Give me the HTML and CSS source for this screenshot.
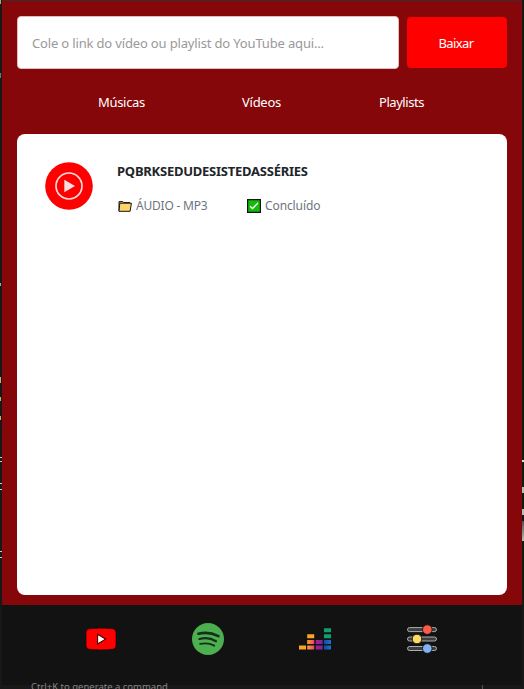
FILE: index.html
```html
<!DOCTYPE html>
<html lang="pt-BR">
<head>
<meta charset="utf-8">
<title>Downloader</title>
<link rel="stylesheet" href="styles.css">
</head>
<body>
<div class="window">
  <main class="content">
    <form class="search">
      <input class="link" type="text" placeholder="Cole o link do vídeo ou playlist do YouTube aqui...">
      <button class="download" type="button">Baixar</button>
    </form>
    <nav class="tabs"><a class="tab">Músicas</a><a class="tab">Vídeos</a><a class="tab tab-playlists">Playlists</a></nav>
    <section class="list">
      <article class="item">
        <svg class="cover" viewBox="0 0 48 48"><circle cx="24" cy="24" r="23.8" fill="#f00"/><circle cx="24" cy="24" r="13" fill="none" stroke="#f5dede" stroke-width="1.7"/><path d="M19.3 17.7v12.6L30 24z" fill="#f5dede"/></svg>
        <div class="info">
          <h1 class="title">PQBRKSEDUDESISTEDASSÉRIES</h1>
          <div class="meta">
            <span class="format"><svg class="folder" viewBox="0 0 14 14"><path d="M1 12.2V2.6h3.8l1 1h6v2" fill="#e5b84d" stroke="#151515"/><path d="M1 12.3 1.8 4.2h11.6l-1.3 8.1z" fill="#ffd56b" stroke="#151515"/></svg><span class="format-text">ÁUDIO - MP3</span></span>
            <span class="status"><svg class="check" viewBox="0 0 14 14"><path d="M.6.6h12.8v12.8H.6z" fill="#13b90b" stroke="#101510" stroke-width="1.2"/><path d="m3 7.2 2.5 2.3L11 4" fill="none" stroke="#fff" stroke-width="1.3"/></svg><span class="status-text">Concluído</span></span>
          </div>
        </div>
      </article>
    </section>
  </main>
  <footer class="dock">
    <svg class="icon" viewBox="0 0 32 32"><path d="M4 5.8Q16 4.3 28 5.8 31 6.4 31 10v12q0 3.8-3 4.3-12 1.3-24 0-3-.5-3-4.3V10q0-3.6 3-4.2Z" fill="#f00" stroke="#240303" stroke-width=".7"/><path d="M12.6 11.2v9.7l7.9-4.8z" fill="#fff" stroke="#3c0000" stroke-width="1.1"/></svg>
    <svg class="icon" viewBox="0 0 32 32"><circle cx="16" cy="16" r="16" fill="#4caf50"/><g fill="none" stroke="#15301a" stroke-linecap="round"><path d="M6.4 10.8q10.4-2.5 20 2.3" stroke-width="2.7"/><path d="M7.4 16q9.2-2.3 16.6 2.2" stroke-width="2.2"/><path d="M8.1 20.9q8-1.8 14.2 1.7" stroke-width="1.8"/></g></svg>
    <svg class="icon" viewBox="0 0 32 32">
      <defs>
        <linearGradient id="b"><stop stop-color="#f9a12a"/><stop offset="1" stop-color="#ec4767"/></linearGradient>
        <linearGradient id="c"><stop stop-color="#b6198b"/><stop offset="1" stop-color="#6a2ba0"/></linearGradient>
        <linearGradient id="d"><stop stop-color="#1746a8"/><stop offset="1" stop-color="#1976c9"/></linearGradient>
      </defs>
      <path d="M0 22.4h7v4H0zM8.2 11.3h7v4h-7z" fill="#fba524"/>
      <path d="M8.2 17h7v4h-7zM8.2 22.4h7v4h-7z" fill="url(#b)"/>
      <path d="M16.7 17h7v4h-7zM16.7 22.4h7v4h-7z" fill="url(#c)"/>
      <path d="M25 17h7v4h-7zM25 22.4h7v4h-7z" fill="url(#d)"/>
      <path d="M25 5.3h7v4h-7zM25 11.3h7v4h-7z" fill="#12a071"/>
    </svg>
    <svg class="icon" viewBox="0 0 32 32"><g fill="#3c3e40" stroke="#b9bdc0" stroke-width=".9"><rect x="1.5" y="4.6" width="29" height="4" rx="2"/><rect x="1.5" y="14" width="29" height="4" rx="2"/><rect x="1.5" y="23.5" width="29" height="4" rx="2"/></g><g stroke="#121212" stroke-width=".9"><circle cx="21.3" cy="6.6" r="4.8" fill="#ff5b4a"/><circle cx="11" cy="16" r="4.8" fill="#ffda63"/><circle cx="21.3" cy="25.5" r="4.8" fill="#82b4f4"/></g></svg>
  </footer>
</div>
<div class="backdrop-line"><span class="hint">Ctrl+K to generate a command</span></div>
</body>
</html>
```
FILE: styles.css
```css
* { box-sizing: border-box; }
body {
  margin: 0;
  width: 524px;
  height: 689px;
  overflow: hidden;
  padding: 1px 2px 0;
  font-family: "Noto Sans", "Open Sans", sans-serif;
  background-color: #181818;
  background-image:
    linear-gradient(#3b2b2f, #3b2b2f),
    linear-gradient(#c8a060, #c8a060),
    linear-gradient(#777, #777),
    linear-gradient(#aa9, #aa9),
    linear-gradient(#d9ac63, #d9ac63),
    linear-gradient(#d9ac63, #d9ac63),
    linear-gradient(#d9ac63, #d9ac63),
    repeating-linear-gradient(#ccc 0 1px, #181818 1px 4px),
    repeating-linear-gradient(#ccc 0 1px, #181818 1px 6px),
    repeating-linear-gradient(#ccc 0 1px, #181818 1px 6px),
    linear-gradient(#ddd, #ddd),
    linear-gradient(#bbb, #bbb),
    linear-gradient(#bbb, #bbb),
    linear-gradient(#554b50, #bbb);
  background-position: 2px 0, 0 0, 0 73px, 0 283px, 0 377px, 0 397px, 0 416px, 0 457px, 0 483px, 0 551px, 522px 460px, 522px 487px, 522px 509px, 522px 521px;
  background-size: 520px 1px, 1px 4px, 1px 5px, 1px 3px, 1px 6px, 1px 4px, 1px 4px, 2px 8px, 2px 7px, 2px 7px, 2px 2px, 2px 6px, 2px 6px, 2px 20px;
  background-repeat: no-repeat;
}
.window { height: 684px; display: flex; flex-direction: column; background: #850709; }
.content { height: 604px; padding: 15px 15px 10px; display: flex; flex-direction: column; }
.search { display: flex; align-items: center; gap: 8px; height: 53px; margin: 0; }
.link {
  width: 382px;
  height: 53px;
  padding: 1px 14px 0;
  border: 1px solid #e2bcbc;
  border-radius: 4px;
  background: #fff;
  font: 13px "Noto Sans", sans-serif;
  letter-spacing: -.16px;
}
.link::placeholder { color: #999; opacity: 1; }
.download {
  width: 100px;
  height: 51px;
  padding: 0 2px 0 0;
  border: 0;
  border-radius: 4px;
  background: #f00;
  color: #fff;
  font: 13px "Noto Sans", sans-serif;
  letter-spacing: -.6px;
}
.tabs {
  display: grid;
  grid-template-columns: repeat(3, 140px);
  justify-content: center;
  align-items: center;
  height: 65px;
  padding-right: 1px;
  color: #fff;
  font-size: 13px;
  letter-spacing: -.3px;
  text-align: center;
}
.tab-playlists { letter-spacing: -.45px; }
.list { flex: 1; background: #fff; border-radius: 8px; padding: 28px; }
.item { display: flex; gap: 24px; }
.cover { width: 48px; height: 48px; }
.title { margin: 0; font-size: 13px; line-height: 18px; font-weight: 700; letter-spacing: -.24px; color: #212529; }
.meta { display: flex; margin-top: 17px; font-size: 12px; line-height: 18px; color: #6c757d; }
.format, .status { display: flex; align-items: center; gap: 4px; }
.format { width: 130px; padding-left: 1px; letter-spacing: -.22px; }
.status { letter-spacing: -.1px; }
.folder, .check { width: 14px; height: 14px; }
.dock { height: 80px; display: flex; justify-content: space-between; background: #121212; padding: 18px 84px 0 83px; }
.icon { width: 32px; height: 32px; }
.backdrop-line { height: 4px; display: flex; align-items: center; padding-left: 29px; width: 481px; border-right: 1px solid #555; }
.hint { font-size: 9.5px; line-height: 4px; color: #858585; white-space: nowrap; }
```
